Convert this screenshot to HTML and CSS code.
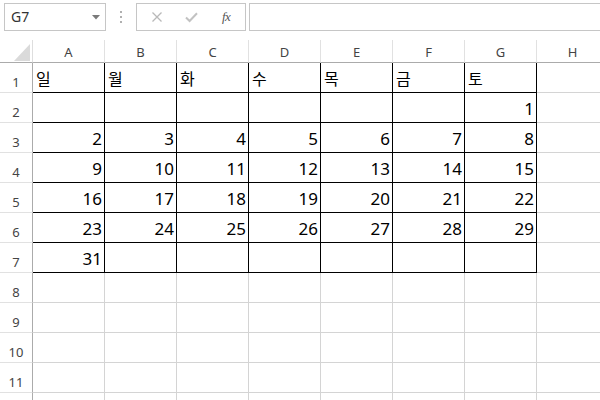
FILE: index.html
```html
<!DOCTYPE html>
<html lang="ko">
<head>
<meta charset="utf-8">
<title>Sheet</title>
<link rel="stylesheet" href="styles.css">
</head>
<body>
<div class="app">
  <div class="fbar">
    <div class="namebox">
      <span class="nb-text">G7</span>
      <svg class="nb-arrow" width="8" height="5" viewBox="0 0 8 5"><path d="M0 0H8L4 4.5Z" fill="#7a7a7a"/></svg>
    </div>
    <div class="dots"><i></i><i></i><i></i></div>
    <div class="btns">
      <svg class="ico" width="12" height="12" viewBox="0 0 12 12"><path d="M1.5 1.5L10.5 10.5M10.5 1.5L1.5 10.5" stroke="#b9b9b9" stroke-width="1.3" fill="none"/></svg>
      <svg class="ico" width="13" height="11" viewBox="0 0 13 11"><path d="M1 5.5L4.6 9L12 1.2" stroke="#c2c2c2" stroke-width="2" fill="none"/></svg>
      <span class="fx">fx</span>
    </div>
    <div class="finput"></div>
  </div>
  <div class="sheet">
    <div class="corner"><svg width="16" height="17" viewBox="0 0 16 17"><path d="M16 0V17H0Z" fill="#dadada"/></svg></div>
    <div class="ch">A</div><div class="ch">B</div><div class="ch">C</div><div class="ch">D</div><div class="ch">E</div><div class="ch">F</div><div class="ch">G</div><div class="ch">H</div>

    <div class="rh">1</div>
    <div class="c t">일</div><div class="c t">월</div><div class="c t">화</div><div class="c t">수</div><div class="c t">목</div><div class="c t">금</div><div class="c t">토</div><div class="c"></div>

    <div class="rh">2</div>
    <div class="c t"></div><div class="c t"></div><div class="c t"></div><div class="c t"></div><div class="c t"></div><div class="c t"></div><div class="c t n">1</div><div class="c"></div>

    <div class="rh">3</div>
    <div class="c t n">2</div><div class="c t n">3</div><div class="c t n">4</div><div class="c t n">5</div><div class="c t n">6</div><div class="c t n">7</div><div class="c t n">8</div><div class="c"></div>

    <div class="rh">4</div>
    <div class="c t n">9</div><div class="c t n">10</div><div class="c t n">11</div><div class="c t n">12</div><div class="c t n">13</div><div class="c t n">14</div><div class="c t n">15</div><div class="c"></div>

    <div class="rh">5</div>
    <div class="c t n">16</div><div class="c t n">17</div><div class="c t n">18</div><div class="c t n">19</div><div class="c t n">20</div><div class="c t n">21</div><div class="c t n">22</div><div class="c"></div>

    <div class="rh">6</div>
    <div class="c t n">23</div><div class="c t n">24</div><div class="c t n">25</div><div class="c t n">26</div><div class="c t n">27</div><div class="c t n">28</div><div class="c t n">29</div><div class="c"></div>

    <div class="rh">7</div>
    <div class="c t n">31</div><div class="c t"></div><div class="c t"></div><div class="c t"></div><div class="c t"></div><div class="c t"></div><div class="c t"></div><div class="c"></div>

    <div class="rh">8</div>
    <div class="c"></div><div class="c"></div><div class="c"></div><div class="c"></div><div class="c"></div><div class="c"></div><div class="c"></div><div class="c"></div>

    <div class="rh">9</div>
    <div class="c"></div><div class="c"></div><div class="c"></div><div class="c"></div><div class="c"></div><div class="c"></div><div class="c"></div><div class="c"></div>

    <div class="rh">10</div>
    <div class="c"></div><div class="c"></div><div class="c"></div><div class="c"></div><div class="c"></div><div class="c"></div><div class="c"></div><div class="c"></div>

    <div class="rh">11</div>
    <div class="c"></div><div class="c"></div><div class="c"></div><div class="c"></div><div class="c"></div><div class="c"></div><div class="c"></div><div class="c"></div>

    <div class="rh"></div>
    <div class="c"></div><div class="c"></div><div class="c"></div><div class="c"></div><div class="c"></div><div class="c"></div><div class="c"></div><div class="c"></div>
  </div>
</div>
</body>
</html>
```
FILE: styles.css
```css
* { box-sizing: border-box; }
html, body { margin: 0; padding: 0; background: #fff; }
body { width: 600px; height: 400px; overflow: hidden; }
.app { width: 600px; height: 400px; overflow: hidden; font-family: "Noto Sans", "Noto Sans CJK KR", sans-serif; }

.fbar { height: 40px; display: flex; align-items: flex-start; padding-top: 3px; padding-left: 4px; }
.namebox { flex: 0 0 102px; height: 28px; border: 1px solid #c6c6c6; display: flex; align-items: center; justify-content: space-between; padding: 0 5px 0 6px; }
.nb-text { font-size: 14px; color: #333; line-height: 1; }
.nb-arrow { display: block; }
.dots { flex: 0 0 30px; height: 28px; display: flex; flex-direction: column; align-items: center; justify-content: center; gap: 3px; }
.dots i { display: block; width: 2px; height: 2px; background: #b0b0b0; }
.btns { flex: 0 0 110px; height: 28px; border: 1px solid #c6c6c6; display: flex; align-items: center; padding-left: 14px; }
.btns .ico { display: block; flex: none; }
.btns .ico:first-child { margin-right: 22px; }
.fx { margin-left: 24px; font-family: "Liberation Serif", "DejaVu Serif", serif; font-style: italic; font-size: 13px; color: #555; letter-spacing: -0.5px; }
.finput { flex: 0 0 400px; height: 28px; border: 1px solid #c6c6c6; margin-left: 3px; }

.sheet { display: grid; grid-template-columns: 33px repeat(8, 72px); grid-template-rows: 23px repeat(12, 30px); }
.corner { border-bottom: 1px solid #ababab; border-right: 1px solid #dedede; display: flex; align-items: flex-end; justify-content: flex-end; padding: 0 2px 1px 0; }
.corner svg { display: block; }
.ch { border-bottom: 1px solid #ababab; border-right: 1px solid #e1e1e1; font-size: 13px; color: #444; text-align: center; line-height: 22px; padding-top: 1px; }
.rh { border-right: 1px solid #ababab; border-bottom: 1px solid #e1e1e1; font-size: 13px; color: #444; text-align: center; display: flex; align-items: flex-end; justify-content: center; line-height: 16px; padding-bottom: 2px; }
.c { border-right: 1px solid #d4d4d4; border-bottom: 1px solid #d4d4d4; font-size: 16px; color: #000; display: flex; align-items: flex-end; padding: 0 2px 3px 3px; line-height: 20px; }
.c.t { border-right-color: #000; border-bottom-color: #000; }
.c.n { justify-content: flex-end; font-size: 17px; }
```
